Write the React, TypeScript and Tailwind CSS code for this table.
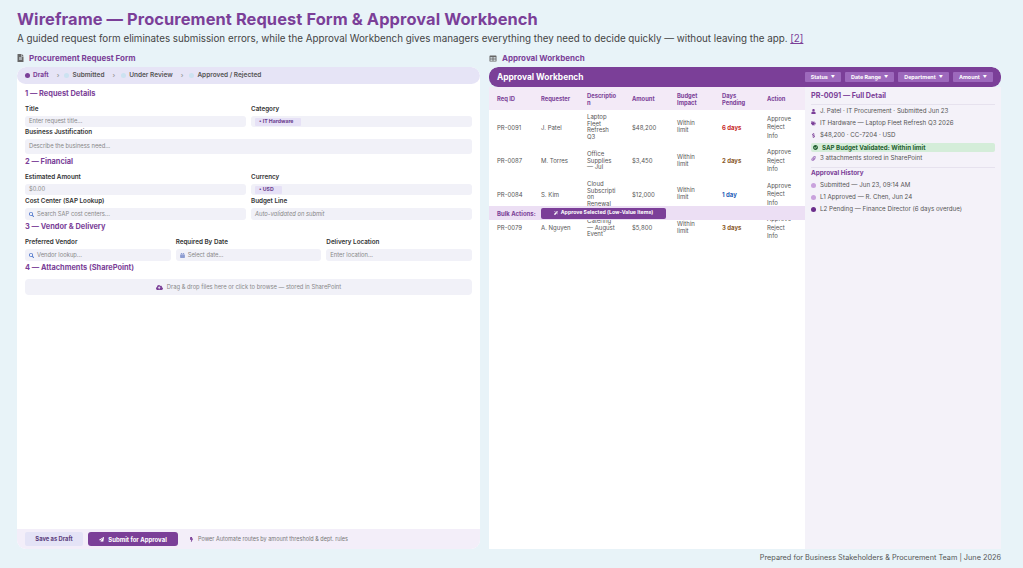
import React from "react";
import {
  FaFileAlt,
  FaTable,
  FaSearch,
  FaCalendarAlt,
  FaCloudUploadAlt,
  FaPaperPlane,
  FaBolt,
  FaUser,
  FaTags,
  FaDollarSign,
  FaCheckCircle,
  FaPaperclip,
  FaMagic,
} from "react-icons/fa";

function SectionHead({ children, mt = "" }: { children: React.ReactNode; mt?: string }) {
  return (
    <div className={`h-[10px] flex items-center text-[7.4px] font-bold text-[#7b3f98] ${mt} mb-[6px]`}>
      {children}
    </div>
  );
}

function Label({ children }: { children: React.ReactNode }) {
  return <div className="mt-[1px] h-[8px] flex items-center text-[6.3px] font-semibold text-[#333]">{children}</div>;
}

function Box({ children, h = "h-[11px]" }: { children?: React.ReactNode; h?: string }) {
  return (
    <div className={`${h} mt-[2px] rounded-[3px] bg-[#f1f1f8] flex items-center px-[4px] text-[5.8px] text-[#888] gap-[3px]`}>
      {children}
    </div>
  );
}

function Tag({ children }: { children: React.ReactNode }) {
  return (
    <span className="h-[8px] flex items-center px-[4px] pr-[8px] bg-[#e6e1f6] text-[#6b3d8f] font-bold text-[5.2px] rounded-[1px]">
      {children}
    </span>
  );
}

const rows = [
  { id: "PR-0091", req: "J. Patel", desc: "Laptop Fleet Refresh Q3", amt: "$48,200", days: "6 days", color: "text-[#c62828]" },
  { id: "PR-0087", req: "M. Torres", desc: "Office Supplies —\u00a0Jul", amt: "$3,450", days: "2 days", color: "text-[#8a5a2b]" },
  { id: "PR-0084", req: "S. Kim", desc: "Cloud Subscription Renewal", amt: "$12,000", days: "1 day", color: "text-[#1f5fb8]" },
  { id: "PR-0079", req: "A. Nguyen", desc: "Catering —\u00a0August Event", amt: "$5,800", days: "3 days", color: "text-[#8a5a2b]" },
];

const cols = "grid grid-cols-[44px_46px_45px_45px_45px_45px_46px]";

export default function App() {
  return (
    <div className="w-[1023px] h-[568px] overflow-hidden bg-[#e8f3f8] font-['Inter',sans-serif] flex flex-col pl-[17px] pr-[22px]">
      <h1 className="mt-[9px] h-[20px] flex items-center text-[16.4px] font-bold text-[#7b3f98] tracking-[0.1px] whitespace-nowrap">
        Wireframe — Procurement Request Form &amp; Approval Workbench
      </h1>
      <p className="mt-[4px] h-[12px] flex items-center text-[9.8px] text-[#444] whitespace-nowrap">
        A guided request form eliminates submission errors, while the Approval Workbench gives managers everything they need to decide quickly — without leaving the app.&nbsp;
        <span className="text-[#7b3f98] underline">[2]</span>
      </p>

      <div className="mt-[8px] flex gap-[9px]">
        {/* LEFT */}
        <div className="w-[463px] flex flex-col">
          <div className="h-[10px] flex items-center gap-[5px] text-[8px] font-bold text-[#7b3f98]">
            <FaFileAlt className="w-[7px] h-[8px] text-[#666]" />
            Procurement Request Form
          </div>
          <div className="mt-[4px] h-[482px] flex flex-col bg-white rounded-[9px] overflow-hidden">
            <div className="h-[17px] rounded-full bg-[#e6e4f6] flex items-center px-[8px] text-[6.5px] font-semibold text-[#555] shrink-0">
              <span className="w-[5px] h-[5px] rounded-full bg-[#7b3f98]" />
              <span className="ml-[3px] text-[#7b3f98] font-bold">Draft</span>
              <span className="ml-[8px] text-[#999]">›</span>
              <span className="ml-[5px] w-[5px] h-[5px] rounded-full bg-[#cce2f1]" />
              <span className="ml-[3px]">Submitted</span>
              <span className="ml-[8px] text-[#999]">›</span>
              <span className="ml-[6px] w-[5px] h-[5px] rounded-full bg-[#cce2f1]" />
              <span className="ml-[3px]">Under Review</span>
              <span className="ml-[8px] text-[#999]">›</span>
              <span className="ml-[6px] w-[5px] h-[5px] rounded-full bg-[#cce2f1]" />
              <span className="ml-[3px]">Approved / Rejected</span>
            </div>

            <div className="flex-1 px-[8px] pt-[5px]">
              <SectionHead>1 — Request Details</SectionHead>
              <div className="grid grid-cols-2 gap-x-[5px]">
                <div>
                  <Label>Title</Label>
                  <Box>Enter request title...</Box>
                </div>
                <div>
                  <Label>Category</Label>
                  <Box>
                    <Tag>• IT Hardware</Tag>
                  </Box>
                </div>
              </div>
              <div className="mt-[2px]">
                <Label>Business Justification</Label>
                <Box h="h-[15px]">Describe the business need...</Box>
              </div>

              <SectionHead mt="mt-[3px]">2 — Financial</SectionHead>
              <div className="grid grid-cols-2 gap-x-[5px]">
                <div>
                  <Label>Estimated Amount</Label>
                  <Box>$0.00</Box>
                </div>
                <div>
                  <Label>Currency</Label>
                  <Box>
                    <Tag>• USD</Tag>
                  </Box>
                </div>
              </div>
              <div className="grid grid-cols-2 gap-x-[5px] mt-[2px]">
                <div>
                  <Label>Cost Center (SAP Lookup)</Label>
                  <Box h="h-[12px]">
                    <FaSearch className="w-[5px] h-[5px] text-[#4a72c9]" />
                    Search SAP cost centers...
                  </Box>
                </div>
                <div>
                  <Label>Budget Line</Label>
                  <Box h="h-[12px]">
                    <span className="italic">Auto-validated on submit</span>
                  </Box>
                </div>
              </div>

              <SectionHead mt="mt-[2px]">3 — Vendor &amp; Delivery</SectionHead>
              <div className="grid grid-cols-3 gap-x-[5px]">
                <div>
                  <Label>Preferred Vendor</Label>
                  <Box h="h-[12px]">
                    <FaSearch className="w-[5px] h-[5px] text-[#4a72c9]" />
                    Vendor lookup...
                  </Box>
                </div>
                <div>
                  <Label>Required By Date</Label>
                  <Box h="h-[12px]">
                    <FaCalendarAlt className="w-[5px] h-[5px] text-[#6a7fc4]" />
                    Select date...
                  </Box>
                </div>
                <div>
                  <Label>Delivery Location</Label>
                  <Box h="h-[12px]">Enter location...</Box>
                </div>
              </div>

              <SectionHead mt="mt-[2px]">4 — Attachments (SharePoint)</SectionHead>
              <div className="mt-[1px] h-[16px] rounded-[4px] bg-[#f1f1f8] flex items-center justify-center gap-[4px] text-[5.8px] text-[#888]">
                <FaCloudUploadAlt className="w-[7px] h-[7px] text-[#7b3f98]" />
                Drag &amp; drop files here or click to browse — stored in SharePoint
              </div>
            </div>

            <div className="h-[20px] shrink-0 bg-[#f3eef9] flex items-center px-[8px] gap-[5px]">
              <div className="w-[58px] h-[14px] bg-[#e4e3f6] rounded-[2px] flex items-center justify-center text-[5.8px] font-bold text-[#5b3c7c]">
                Save as Draft
              </div>
              <div className="w-[90px] h-[14px] bg-[#7b3f98] rounded-[3px] flex items-center justify-center gap-[4px] text-[6px] font-bold text-white">
                <FaPaperPlane className="w-[5px] h-[5px]" />
                Submit for Approval
              </div>
              <div className="ml-[6px] flex items-center gap-[4px] text-[5.5px] text-[#777]">
                <FaBolt className="w-[5px] h-[5px] text-[#7b3f98]" />
                Power Automate routes by amount threshold &amp; dept. rules
              </div>
            </div>
          </div>
        </div>

        {/* RIGHT */}
        <div className="w-[512px] flex flex-col">
          <div className="h-[10px] flex items-center gap-[5px] text-[8px] font-bold text-[#7b3f98]">
            <FaTable className="w-[8px] h-[7px] text-[#666]" />
            Approval Workbench
          </div>
          <div className="mt-[4px] h-[482px] flex flex-col rounded-t-[9px] overflow-hidden">
            <div className="h-[20px] shrink-0 bg-[#7b3f98] rounded-[9px] flex items-center pl-[8px] pr-[8px]">
              <span className="text-[8.4px] font-bold text-white">Approval Workbench</span>
              <div className="ml-auto flex gap-[4px]">
                {["Status", "Date Range", "Department", "Amount"].map((f) => (
                  <span
                    key={f}
                    className="h-[10px] px-[6px] bg-[#9d69bc] rounded-[1px] flex items-center gap-[3px] text-[5.4px] font-bold text-white"
                  >
                    {f} <span className="text-[4px]">▼</span>
                  </span>
                ))}
              </div>
            </div>
            <div className="flex-1 flex">
              {/* table */}
              <div className="w-[316px] bg-white relative">
                <div className={`${cols} h-[23px] bg-[#f3eaf7] items-center text-[5.8px] font-bold text-[#7b3f98] leading-[7px]`}>
                  <div className="pl-[8px]">Req ID</div>
                  <div className="pl-[8px]">Requester</div>
                  <div className="pl-[8px] pr-[6px] break-all">Description</div>
                  <div className="pl-[8px]">Amount</div>
                  <div className="pl-[8px] pr-[4px]">Budget Impact</div>
                  <div className="pl-[8px] pr-[8px]">Days Pending</div>
                  <div className="pl-[8px]">Action</div>
                </div>
                {rows.map((r) => (
                  <div key={r.id} className={`${cols} h-[32.5px] items-center text-[6px] text-[#555] mt-[1px]`}>
                    <div className="pl-[8px]">{r.id}</div>
                    <div className="pl-[8px]">{r.req}</div>
                    <div className="pl-[8px] pr-[8px] leading-[6.5px] break-words">{r.desc}</div>
                    <div className="pl-[8px]">{r.amt}</div>
                    <div className="pl-[8px] pr-[14px] leading-[6.8px]">Within limit</div>
                    <div className={`pl-[8px] font-bold ${r.color}`}>{r.days}</div>
                    <div className="pl-[8px] leading-[8.5px]">
                      <div>Approve</div>
                      <div>Reject</div>
                      <div>Info</div>
                    </div>
                  </div>
                ))}
                <div className="absolute left-0 right-0 top-[119px] h-[14px] bg-[#ecdff4] flex items-center pl-[8px]">
                  <span className="text-[6px] font-bold text-[#7b3f98] w-[44px]">Bulk Actions:</span>
                  <span className="w-[125px] h-[11px] rounded-[2px] bg-[#7b3f98] flex items-center justify-center gap-[3px] text-[5.2px] font-bold text-white">
                    <FaMagic className="w-[4px] h-[4px]" />
                    Approve Selected (Low-Value Items)
                  </span>
                </div>
              </div>

              {/* detail */}
              <div className="w-[196px] bg-[#f4f2f9] px-[6px] pt-[4px] text-[6.2px] text-[#555]">
                <div className="h-[10px] flex items-center text-[7.2px] font-bold text-[#7b3f98]">PR-0091 — Full Detail</div>
                <div className="mt-[3px] border-t border-[#e6e2ee]" />
                <div className="h-[12px] flex items-center gap-[4px]">
                  <FaUser className="w-[5px] h-[5px] text-[#7b3f98]" />
                  J. Patel · IT Procurement · Submitted Jun 23
                </div>
                <div className="h-[12px] flex items-center gap-[4px]">
                  <FaTags className="w-[5px] h-[5px] text-[#7b3f98]" />
                  IT Hardware — Laptop Fleet Refresh Q3 2026
                </div>
                <div className="h-[12px] flex items-center gap-[4px]">
                  <FaDollarSign className="w-[5px] h-[5px] text-[#7b3f98]" />
                  $48,200 · CC-7204 · USD
                </div>
                <div className="mt-[2px] h-[9px] rounded-[2px] bg-[#d4edd9] flex items-center gap-[4px] px-[2px] text-[#1f5e2e] font-bold">
                  <FaCheckCircle className="w-[5px] h-[5px] text-[#1f5e2e]" />
                  SAP Budget Validated: Within limit
                </div>
                <div className="h-[12px] flex items-center gap-[4px]">
                  <FaPaperclip className="w-[5px] h-[5px] text-[#9a6ab8]" />
                  3 attachments stored in SharePoint
                </div>
                <div className="mt-[3px] border-t border-[#e6e2ee]" />
                <div className="mt-[1px] h-[10px] flex items-center text-[6.4px] font-bold text-[#7b3f98]">Approval History</div>
                <div className="h-[12px] flex items-center gap-[4px]">
                  <span className="w-[5px] h-[5px] rounded-full bg-[#c9a2dd]" />
                  Submitted — Jun 23, 09:14 AM
                </div>
                <div className="h-[12px] flex items-center gap-[4px]">
                  <span className="w-[5px] h-[5px] rounded-full bg-[#c9a2dd]" />
                  L1 Approved — R. Chen, Jun 24
                </div>
                <div className="h-[12px] flex items-center gap-[4px]">
                  <span className="w-[5px] h-[5px] rounded-full bg-[#6b2e8c]" />
                  L2 Pending — Finance Director (6 days overdue)
                </div>
              </div>
            </div>
          </div>
        </div>
      </div>

      <div className="h-[22px] flex items-center justify-end text-[7.3px] text-[#555]">
        Prepared for Business Stakeholders &amp; Procurement Team | June 2026
      </div>
    </div>
  );
}
